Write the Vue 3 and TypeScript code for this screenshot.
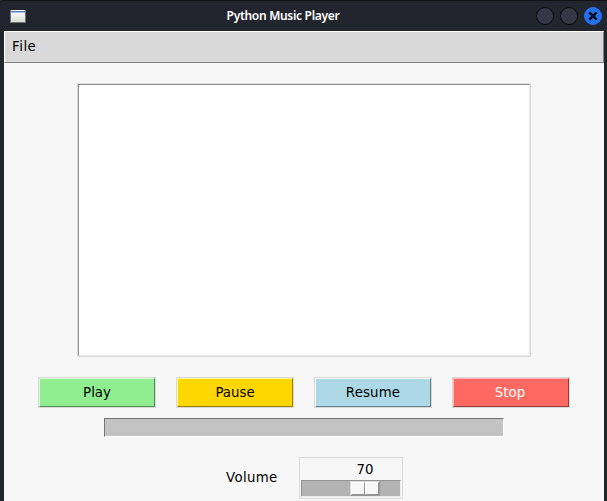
<script setup lang="ts">
import { ref } from 'vue'

interface Control {
  label: string
  kind: string
}

const controls: Control[] = [
  { label: 'Play', kind: 'play' },
  { label: 'Pause', kind: 'pause' },
  { label: 'Resume', kind: 'resume' },
  { label: 'Stop', kind: 'stop' },
]

const volume = ref(70)
</script>

<template>
  <div class="window">
    <header class="titlebar">
      <svg class="app-icon" width="16" height="13" viewBox="0 0 16 13">
        <defs>
          <linearGradient id="paper" x1="0" y1="0" x2="0" y2="1">
            <stop offset="0" stop-color="#ffffff" />
            <stop offset="1" stop-color="#dcdcd4" />
          </linearGradient>
        </defs>
        <rect x="0" y="0" width="16" height="13" fill="#6f7378" />
        <rect x="1" y="0" width="14" height="12" fill="url(#paper)" />
        <rect x="1" y="1" width="14" height="1" fill="#5479ad" />
        <rect x="1" y="2" width="14" height="1" fill="#a9c4e6" />
      </svg>
      <h1 class="title">Python Music Player</h1>
      <div class="window-buttons">
        <span class="round"></span>
        <span class="round"></span>
        <span class="round close">
          <svg width="10" height="10" viewBox="0 0 10 10">
            <path d="M1.3 1.3L8.7 8.7M8.7 1.3L1.3 8.7" stroke="#0b1020" stroke-width="2.6" />
          </svg>
        </span>
      </div>
    </header>
    <main class="client">
      <nav class="menubar"><span>File</span></nav>
      <div class="playlist"></div>
      <div class="controls">
        <button v-for="c in controls" :key="c.kind" class="control" :class="c.kind">
          <span class="face">{{ c.label }}</span>
        </button>
      </div>
      <div class="progress"></div>
      <div class="volume">
        <span class="volume-label">Volume</span>
        <div class="scale">
          <div class="value"><span>{{ volume }}</span></div>
          <div class="trough">
            <div class="slider"><i></i><i></i></div>
          </div>
        </div>
      </div>
    </main>
  </div>
</template>

<style>
body {
  background: #23252e;
  overflow: hidden;
}
</style>

<style scoped>
* {
  box-sizing: border-box;
}
.window {
  width: 607px;
  height: 501px;
  overflow: hidden;
  background: #23252e;
  font-family: "DejaVu Sans", sans-serif;
  font-size: 13.33px;
  color: #000;
}
.titlebar {
  display: grid;
  grid-template-columns: 100px 1fr 100px;
  align-items: center;
  height: 31px;
  border-top: 1px solid #101116;
  border-top-left-radius: 4px;
}
.app-icon {
  display: block;
  margin-left: 10px;
}
.title {
  margin: 0 0 0 -41px;
  text-align: center;
  white-space: nowrap;
  font: 600 12px/16px "Noto Sans", sans-serif;
  letter-spacing: -0.3px;
  color: #fff;
}
.window-buttons {
  display: flex;
  justify-content: flex-end;
  gap: 6px;
  padding-right: 5px;
}
.round {
  display: flex;
  align-items: center;
  justify-content: center;
  width: 18px;
  height: 18px;
  border: 1px solid #07080b;
  border-radius: 50%;
  background: #343845;
}
.close {
  border-color: #2470ee;
  background: #2470ee;
}
.client {
  display: flex;
  flex-direction: column;
  width: 600px;
  height: 470px;
  margin-left: 4px;
  background: #f7f7f7;
}
.menubar {
  flex: none;
  height: 32px;
  padding-left: 7px;
  border: 1px solid;
  border-color: #fff #828282 #828282 #fff;
  background: #d9d9d9;
  line-height: 29px;
  letter-spacing: 0.5px;
}
.playlist {
  flex: none;
  width: 452px;
  height: 272px;
  margin: 21px 0 1px 74px;
  border: 1px solid;
  border-color: #949494 #e8e8e8 #e8e8e8 #949494;
  outline: 1px solid #d9d9d9;
  background: #fff;
}
.controls {
  display: flex;
  flex: none;
  gap: 20px;
  margin: 20px 0 0 34px;
}
.control {
  display: block;
  width: 118px;
  height: 31px;
  padding: 0;
  border: 1px solid #d9d9d9;
  background: none;
  font: inherit;
  color: #000;
}
.face {
  display: block;
  height: 29px;
  border: 1px solid;
  line-height: 27px;
}
.play .face {
  background: #90ee90;
  border-color: #d5fcd5 #568e56 #568e56 #d5fcd5;
}
.pause .face {
  background: #ffd700;
  border-color: #fff79a #998100 #998100 #fff79a;
}
.resume .face {
  background: #add8e6;
  border-color: #fff #67818a #67818a #fff;
  letter-spacing: 0.15px;
}
.stop .face {
  padding-right: 2px;
  background: #ff6961;
  border-color: #ffb5b5 #993f3a #993f3a #ffb5b5;
  color: #fff;
}
.progress {
  flex: none;
  width: 400px;
  height: 19px;
  margin: 10px 0 0 100px;
  border: 1px solid;
  border-color: #757575 #fff #fff #757575;
  background: #c3c3c3;
}
.volume {
  display: flex;
  flex: none;
  align-items: center;
  margin: 20px 0 0 222px;
}
.volume-label {
  width: 73px;
  padding-bottom: 2px;
  letter-spacing: 0.35px;
}
.scale {
  width: 104px;
  height: 42px;
  padding: 1px;
  border: 1px solid #d9d9d9;
}
.value {
  height: 21px;
  padding-left: 50px;
  line-height: 21px;
}
.value span {
  display: block;
  width: 28px;
  text-align: center;
}
.trough {
  width: 100px;
  height: 17px;
  padding-left: 48px;
  border: 1px solid;
  border-color: #949494 #ededed #ededed #949494;
  background: #b3b3b3;
}
.slider {
  display: flex;
  width: 30px;
  height: 15px;
  border: 1px solid;
  border-color: #d9d9d9 #949494 #949494 #d9d9d9;
}
.slider i {
  width: 14px;
  height: 13px;
  border: 1px solid;
  border-color: #fff #949494 #949494 #fff;
  background: #f7f7f7;
}
</style>
